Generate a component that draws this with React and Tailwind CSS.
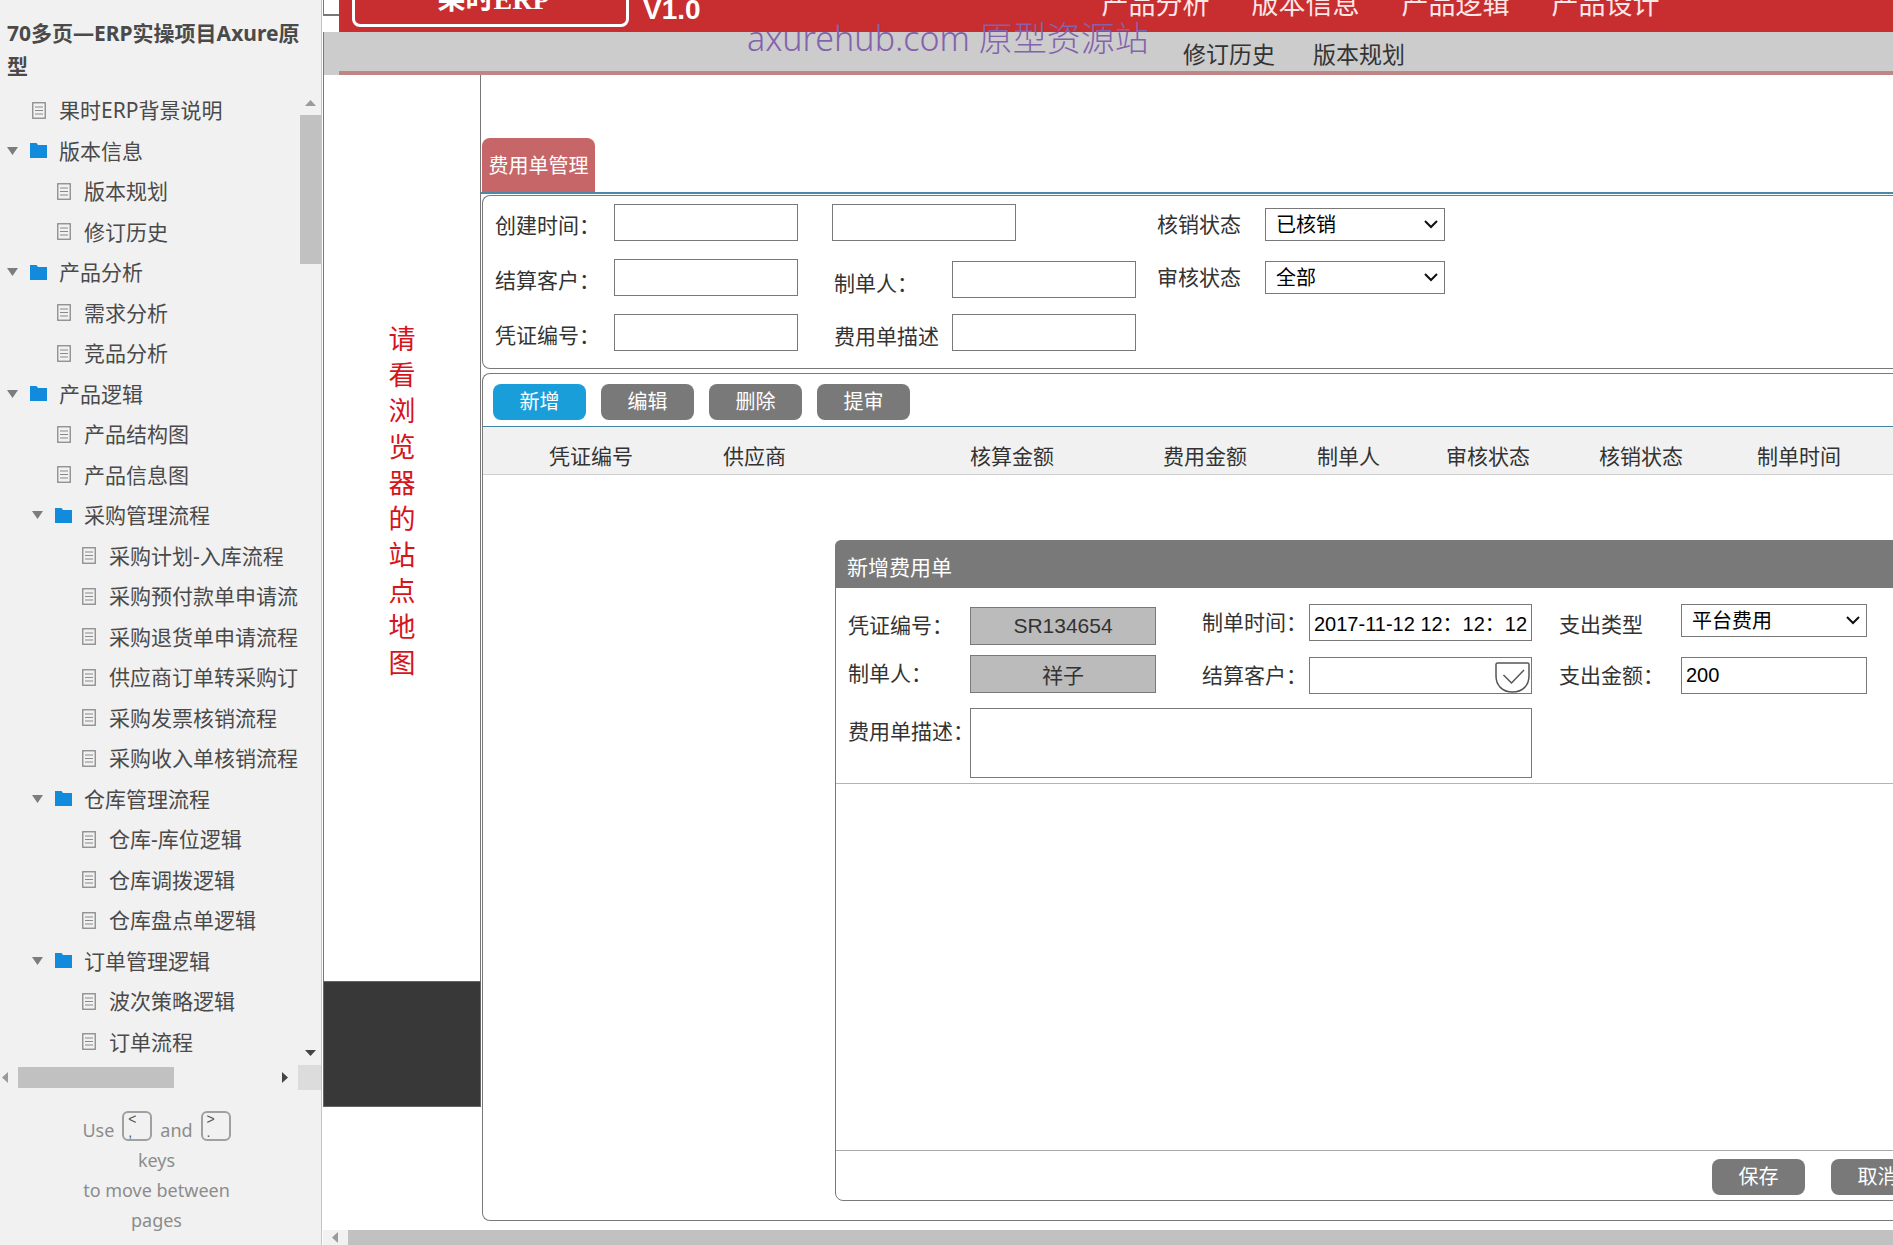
import React, { useState } from "react";
import clsx from "clsx";

const pages = [
    { level: 0, title: "果时ERP背景说明" },
    { level: 0, title: "版本信息", folder: true },
    { level: 1, title: "版本规划" },
    { level: 1, title: "修订历史" },
    { level: 0, title: "产品分析", folder: true },
    { level: 1, title: "需求分析" },
    { level: 1, title: "竞品分析" },
    { level: 0, title: "产品逻辑", folder: true },
    { level: 1, title: "产品结构图" },
    { level: 1, title: "产品信息图" },
    { level: 1, title: "采购管理流程", folder: true },
    { level: 2, title: "采购计划-入库流程" },
    { level: 2, title: "采购预付款单申请流" },
    { level: 2, title: "采购退货单申请流程" },
    { level: 2, title: "供应商订单转采购订" },
    { level: 2, title: "采购发票核销流程" },
    { level: 2, title: "采购收入单核销流程" },
    { level: 1, title: "仓库管理流程", folder: true },
    { level: 2, title: "仓库-库位逻辑" },
    { level: 2, title: "仓库调拨逻辑" },
    { level: 2, title: "仓库盘点单逻辑" },
    { level: 1, title: "订单管理逻辑", folder: true },
    { level: 2, title: "波次策略逻辑" },
    { level: 2, title: "订单流程" },
];

const indents = ["pl-[7px]", "pl-8", "pl-[57px]"];

const columns = [
    { title: "凭证编号", width: "w-[174px]" },
    { title: "供应商", width: "w-[247px]" },
    { title: "核算金额", width: "w-[193px]" },
    { title: "费用金额", width: "w-[154px]" },
    { title: "制单人", width: "w-[129px]" },
    { title: "审核状态", width: "w-[153px]" },
    { title: "核销状态", width: "w-[158px]" },
    { title: "制单时间", width: "w-[160px]" },
];

const PageIcon = () => (
    <svg width="14" height="17" viewBox="0 0 14 17" fill="none" stroke="#8a8a8a">
        <rect x="0.75" y="0.75" width="12.5" height="15.5" strokeWidth="1.3" />
        <path d="M3 5h8M3 8.5h8M3 12h8" strokeWidth="1.2" />
    </svg>
);

const FolderIcon = () => (
    <svg width="17" height="15" viewBox="0 0 17 15" fill="#128bdc">
        <path d="M0 0h6.5l1.5 2h9v13H0z" />
    </svg>
);

const Arrow = ({ direction, dark }) => {
    const shapes = {
        up: "M0 6 L5.5 0 L11 6z",
        down: "M0 0 L11 0 L5.5 6z",
        left: "M6 0 L6 11 L0 5.5z",
        right: "M0 0 L6 5.5 L0 11z",
    };
    const vertical = direction === "up" || direction === "down";
    return (
        <svg width={vertical ? 11 : 6} height={vertical ? 6 : 11} fill={dark ? "#454545" : "#9a9a9a"}>
            <path d={shapes[direction]} />
        </svg>
    );
};

const TreeRow = ({ level, title, folder }) => {
    const row = clsx("flex w-full items-center whitespace-nowrap text-left", indents[level]);
    const content = (
        <>
            <span className="w-[23px] shrink-0">
                {folder && (
                    <svg width="11" height="8" fill="#7d7d7d">
                        <path d="M0 0h11L5.5 8z" />
                    </svg>
                )}
            </span>
            <span className="flex w-[17px] shrink-0 justify-center">{folder ? <FolderIcon /> : <PageIcon />}</span>
            <span className="ml-3">{title}</span>
        </>
    );
    return (
        <li className="flex">
            {folder ? (
                <button type="button" className={row}>{content}</button>
            ) : (
                <a href="#" className={row}>{content}</a>
            )}
        </li>
    );
};

const Key = ({ top, bottom }) => (
    <kbd className="flex size-[30px] flex-col rounded-md border-2 border-[#a0a0a0] pl-1 font-['Liberation_Sans'] text-sm leading-[13px] text-[#555]">
        <span>{top}</span>
        <span>{bottom}</span>
    </kbd>
);

const Sidebar = () => (
    <aside className="flex w-[322px] shrink-0 flex-col border-r border-[#c4c4c4] bg-[#f1f1f1] text-[21px] text-[#4a4a4a]">
        <h1 className="h-[90px] pt-[17px] pr-2 pl-[7px] font-bold leading-[33px]">70多页—ERP实操项目Axure原型</h1>
        <div className="flex min-h-0 flex-1">
            <ul className="grid min-w-0 flex-1 auto-rows-fr overflow-hidden leading-8">
                {pages.map((page) => (
                    <TreeRow key={page.title + page.level} {...page} />
                ))}
            </ul>
            <div className="flex w-[21px] shrink-0 flex-col items-center pt-2.5 pb-1.5">
                <Arrow direction="up" />
                <div className="mt-[9px] h-[149px] w-full bg-[#c1c1c1]" />
                <div className="flex-1" />
                <Arrow direction="down" dark />
            </div>
        </div>
        <div className="mt-[3px] flex h-[25px] items-center pl-0.5">
            <Arrow direction="left" />
            <div className="ml-2.5 h-[21px] w-[156px] bg-[#c1c1c1]" />
            <div className="flex-1" />
            <Arrow direction="right" dark />
            <div className="ml-2.5 h-full w-[23px] bg-[#dcdcdc]" />
        </div>
        <div className="flex h-[155px] flex-col items-center pt-[21px] pr-2 text-lg leading-[30px] text-[#8c8c8c]">
            <div className="flex gap-2">
                <span className="pt-1">Use</span>
                <Key top="<" bottom="," />
                <span className="pt-1">and</span>
                <Key top=">" bottom="." />
            </div>
            <p className="w-40 text-center">keys<br />to move between pages</p>
        </div>
    </aside>
);

const TopBar = () => (
    <header className="relative">
        <div className="flex h-8">
            <div className="h-4 w-4 border-b-2 border-l border-[#777]" />
            <div className="flex flex-1 items-end overflow-hidden bg-[#c82d30] text-white">
                <div className="mb-[5px] ml-[13px] flex h-[60px] w-[277px] shrink-0 items-end justify-center rounded-lg border-3 border-white pb-2 pl-1.5">
                    <span className="font-['Liberation_Serif','Noto_Sans_CJK_SC',serif] text-[28px] leading-8 font-bold">果时ERP</span>
                </div>
                <span className="ml-3.5 pb-1.5 font-['Liberation_Sans',sans-serif] text-[28px] leading-8 font-bold">V1.0</span>
                <nav className="ml-[401px] flex gap-[42px] pb-3 text-[27px] leading-8 whitespace-nowrap text-[#fde6e6]">
                    <a href="#">产品分析</a>
                    <a href="#">版本信息</a>
                    <a href="#">产品逻辑</a>
                    <a href="#">产品设计</a>
                </nav>
            </div>
        </div>
        <div className="flex h-[43px] border-l border-[#777] bg-[#ccc]">
            <nav className="ml-[15px] flex flex-1 items-center gap-[38px] border-b-4 border-[#c08585] pt-1.5 pl-[844px] text-[23px] whitespace-nowrap text-[#333]">
                <a href="#">修订历史</a>
                <a href="#">版本规划</a>
            </nav>
        </div>
        <div className="absolute top-3.5 left-[424px] text-[34px] leading-12 font-light whitespace-nowrap text-[#8462ad]">
            axurehub.com 原型资源站
        </div>
    </header>
);

const SiteMapNote = () => (
    <div className="flex w-[158px] shrink-0 flex-col">
        <div className="flex flex-1 justify-center border-x border-[#777] pt-[246px]">
            <p className="w-[27px] text-[27px] leading-9 text-[#d6141c]">请看浏览器的站点地图</p>
        </div>
        <div className="h-[126px] border border-[#666] bg-[#383838]" />
        <div className="h-[123px]" />
    </div>
);

const box = "h-[37px] border border-[#797979] bg-white";

const Select = ({ id, options, className }) => (
    <div className={clsx("relative h-[33px]", className)}>
        <select id={id} className="size-full appearance-none border border-[#797979] bg-white pl-2.5 text-[20px] leading-6 text-black">
            {options.map((option) => (
                <option key={option}>{option}</option>
            ))}
        </select>
        <svg className="pointer-events-none absolute top-3 right-[7px]" width="14" height="9" fill="none" stroke="#111" strokeWidth="2">
            <path d="M1 1l6 6 6-6" />
        </svg>
    </div>
);

const SearchForm = () => (
    <form className="flex h-[174px] rounded-l-lg border border-r-0 border-[#797979] pt-2 pl-3">
        <div className="flex w-[337px] shrink-0 flex-col gap-[18px]">
            {["创建时间：", "结算客户：", "凭证编号："].map((label) => (
                <div key={label} className="flex">
                    <label htmlFor={label} className="h-[37px] w-[119px] pt-[3px] leading-[37px] whitespace-nowrap">{label}</label>
                    <input id={label} className={clsx(box, "w-[184px]")} />
                </div>
            ))}
        </div>
        <div className="w-[325px] shrink-0">
            <input aria-label="创建时间结束" className={clsx(box, "mb-5 block w-[184px]")} />
            <div className="flex flex-col gap-4">
                {["制单人：", "费用单描述"].map((label) => (
                    <div key={label} className="flex">
                        <label htmlFor={label} className="h-[37px] w-[120px] pt-1 pl-0.5 leading-[37px] whitespace-nowrap">{label}</label>
                        <input id={label} className={clsx(box, "w-[184px]")} />
                    </div>
                ))}
            </div>
        </div>
        <div className="flex flex-col gap-5 pt-1">
            <div className="flex h-[33px] items-center">
                <label htmlFor="writeoff" className="w-[108px]">核销状态</label>
                <Select id="writeoff" options={["已核销", "未核销"]} className="w-[180px]" />
            </div>
            <div className="flex h-[33px] items-center">
                <label htmlFor="audit" className="w-[108px]">审核状态</label>
                <Select id="audit" options={["全部", "已审核"]} className="w-[180px]" />
            </div>
        </div>
    </form>
);

const ActionButton = ({ children, primary, onClick }) => (
    <button
        type="button"
        onClick={onClick}
        className={clsx("h-9 w-[93px] rounded-lg text-[20px] text-white", primary ? "bg-[#1a9ed9]" : "bg-[#797979]")}
    >
        {children}
    </button>
);

const ExpenseDialog = ({ onClose }) => {
    const [amount, setAmount] = useState("200");

    return (
        <div
            role="dialog"
            aria-label="新增费用单"
            className="absolute top-[166px] -right-11 bottom-[19px] left-[352px] flex flex-col rounded-lg border border-[#797979] bg-white"
        >
            <h2 className="-mx-px -mt-px h-12 rounded-t-md bg-[#797979] pt-[5px] pl-3 leading-[46px] text-white">新增费用单</h2>
            <div className="flex h-[196px] border-b border-[#b4b4b4] pl-3 whitespace-nowrap">
                <div className="w-[711px] shrink-0 pt-4">
                    <div className="flex">
                        <div className="flex w-[354px] flex-col gap-2.5 pt-[3px]">
                            <div className="flex h-[38px] items-center">
                                <label htmlFor="no" className="w-[122px]">凭证编号：</label>
                                <input id="no" readOnly value="SR134654" className="h-full w-[186px] border border-[#797979] bg-[#bbb] text-center" />
                            </div>
                            <div className="flex h-[38px] items-center">
                                <label htmlFor="maker" className="w-[122px]">制单人：</label>
                                <input id="maker" readOnly value="祥子" className="h-full w-[186px] border border-[#797979] bg-[#bbb] text-center" />
                            </div>
                        </div>
                        <div className="flex flex-col gap-4">
                            <div className="flex h-[37px] items-center">
                                <label htmlFor="time" className="w-[107px]">制单时间：</label>
                                <input id="time" defaultValue="2017-11-12 12：12：12" className={clsx(box, "w-[223px] pl-1 text-[20px] text-black")} />
                            </div>
                            <div className="relative flex h-[37px] items-center">
                                <label htmlFor="customer" className="w-[107px]">结算客户：</label>
                                <input id="customer" className={clsx(box, "w-[223px]")} />
                                <svg className="absolute right-0.5 bottom-px" width="35" height="31" fill="none" stroke="#555">
                                    <path d="M2.5 1h30q1.5 0 1.5 1.5V14c0 9-6 16-16.5 16S1 23 1 14V2.5Q1 1 2.5 1z" strokeWidth="1.5" />
                                    <path d="M8.5 13l8 8L29 8" strokeWidth="1.5" />
                                </svg>
                            </div>
                        </div>
                    </div>
                    <div className="mt-[14px] flex">
                        <label htmlFor="desc" className="w-[122px] pt-2 leading-8">费用单描述：</label>
                        <textarea id="desc" className="h-[70px] w-[562px] resize-none border border-[#797979]" />
                    </div>
                </div>
                <div className="flex flex-col gap-4 pt-4">
                    <div className="flex h-[37px]">
                        <label htmlFor="type" className="w-[122px] pt-0.5 leading-[37px]">支出类型</label>
                        <Select id="type" options={["平台费用", "物流费用"]} className="w-[186px]" />
                    </div>
                    <div className="flex h-[37px] items-center">
                        <label htmlFor="amount" className="w-[122px]">支出金额：</label>
                        <input
                            id="amount"
                            value={amount}
                            onChange={(e) => setAmount(e.target.value)}
                            className={clsx(box, "w-[186px] pl-1 text-[20px] text-black")}
                        />
                    </div>
                </div>
            </div>
            <div className="flex-1" />
            <div className="flex h-[50px] items-center justify-end gap-[26px] border-t border-[#a8a8a8] pt-0.5 pr-3">
                <ActionButton>保存</ActionButton>
                <ActionButton onClick={onClose}>取消</ActionButton>
            </div>
        </div>
    );
};

const ExpensePanel = () => {
    const [open, setOpen] = useState(true);

    return (
        <section className="relative mt-1 flex flex-1 flex-col rounded-l-lg border border-r-0 border-[#797979]">
            <div className="flex h-[53px] items-center gap-[15px] border-b border-[#3f87a0] pt-1 pl-2.5">
                <ActionButton primary onClick={() => setOpen(true)}>新增</ActionButton>
                <ActionButton>编辑</ActionButton>
                <ActionButton>删除</ActionButton>
                <ActionButton>提审</ActionButton>
            </div>
            <div className="border-b border-[#d0d0d0] bg-[#f1f1f1] pl-[66px]">
                <table className="w-[1368px] table-fixed">
                    <thead>
                        <tr className="h-[47px] text-left">
                            {columns.map(({ title, width }) => (
                                <th key={title} className={clsx("pt-3 font-normal whitespace-nowrap", width)}>{title}</th>
                            ))}
                        </tr>
                    </thead>
                </table>
            </div>
            {open && <ExpenseDialog onClose={() => setOpen(false)} />}
        </section>
    );
};

export default function App() {
    return (
        <div className="flex h-screen min-h-[1000px] overflow-hidden bg-white font-['Noto_Sans','Noto_Sans_CJK_SC',sans-serif]">
            <Sidebar />
            <main className="flex min-w-0 flex-1 flex-col overflow-hidden pl-px">
                <TopBar />
                <div className="flex min-h-0 flex-1">
                    <SiteMapNote />
                    <div className="flex min-w-0 flex-1 flex-col pt-[63px] pb-[9px] pl-px font-['Liberation_Sans','Noto_Sans_CJK_SC',sans-serif] text-[21px] leading-8 text-[#333]">
                        <div className="-ml-px border-b-2 border-[#4a8aa6] pl-px">
                            <button type="button" className="block h-[54px] w-[113px] rounded-t-lg bg-[#c76668] pt-0.5 text-[20px] text-white">
                                费用单管理
                            </button>
                        </div>
                        <div className="h-px" />
                        <SearchForm />
                        <ExpensePanel />
                    </div>
                </div>
                <div className="flex h-[15px] shrink-0 items-center bg-[#f1f1f1] pl-[9px]">
                    <Arrow direction="left" />
                    <div className="ml-2.5 h-full flex-1 bg-[#c1c1c1]" />
                </div>
            </main>
        </div>
    );
}
